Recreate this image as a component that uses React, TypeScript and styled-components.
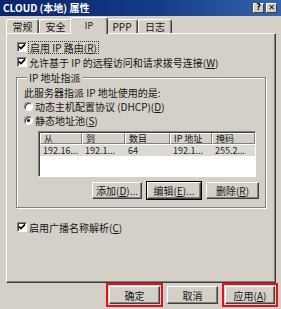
import React from 'react';
import styled, { createGlobalStyle } from 'styled-components';

const GlobalStyle = createGlobalStyle`
	html, body {
		margin: 0;
		padding: 0;
		background: #d4d0c8;
	}
	body {
		font-family: "Noto Sans CJK SC", "DejaVu Sans", sans-serif;
		font-size: 10px;
		color: #161616;
	}
	* {
		box-sizing: border-box;
	}
`;

const Window = styled.div`
	width: 281px;
	height: 309px;
	display: flex;
	flex-direction: column;
	background: #d4d0c8;
	overflow: hidden;
`;

const TitleBar = styled.div`
	height: 16px;
	flex: none;
	display: flex;
	align-items: center;
	justify-content: space-between;
	padding: 0 4px 0 3px;
	background: linear-gradient(to right, #0a246a 0%, #163a86 55%, #3566ad 100%);
	color: #fff;
	font-weight: bold;
	font-size: 10px;
	line-height: 12px;
`;

const TitleButtons = styled.div`
	display: flex;
	gap: 2px;
`;

const TitleBtn = styled.span`
	width: 11px;
	height: 10px;
	display: flex;
	align-items: center;
	justify-content: center;
	background: #d4d0c8;
	border: 1px solid;
	border-color: #fff #404040 #404040 #fff;
	color: #000;
	font-family: "DejaVu Sans", sans-serif;
	font-size: 8px;
	font-weight: bold;
	line-height: 8px;
`;

const TabStrip = styled.div`
	position: relative;
	z-index: 1;
	height: 17px;
	flex: none;
	display: flex;
	align-items: flex-end;
	padding-left: 6px;
`;

const Tab = styled.div<{ $active?: boolean; $w: number }>`
	position: relative;
	z-index: ${(p) => (p.$active ? 2 : 1)};
	width: ${(p) => p.$w}px;
	height: ${(p) => (p.$active ? 17 : 14)}px;
	margin: ${(p) => (p.$active ? '0 -2px -1px' : '0')};
	display: flex;
	align-items: center;
	justify-content: center;
	background: #d4d0c8;
	border-top: 1px solid #fff;
	border-left: 1px solid #fff;
	border-right: 1px solid #404040;
	border-radius: 3px 3px 0 0;
	box-shadow: inset -1px 0 0 #808080;
	font-size: ${(p) => (p.$active ? 9 : 10)}px;
	line-height: 11px;
	padding-bottom: ${(p) => (p.$active ? 2 : 0)}px;
`;

const Panel = styled.div`
	width: 270px;
	height: 250px;
	flex: none;
	margin-left: 6px;
	display: flex;
	flex-direction: column;
	padding: 6px 0 0 10px;
	border-top: 1px solid #fff;
	border-left: 1px solid #fff;
	border-right: 1px solid #404040;
	border-bottom: 1px solid #404040;
	box-shadow: inset -1px -1px 0 #808080;
`;

const CheckRow = styled.div<{ $top?: number }>`
	height: 14px;
	margin-top: ${(p) => p.$top || 0}px;
	display: flex;
	align-items: center;
	gap: 2px;
	line-height: 11px;
	white-space: nowrap;
`;

const Box = styled.span`
	width: 10px;
	height: 10px;
	flex: none;
	display: flex;
	align-items: center;
	justify-content: center;
	background: #fff;
	border: 1px solid;
	border-color: #808080 #fff #fff #808080;
	box-shadow: inset 1px 1px 0 #404040;
`;

const FocusLabel = styled.span`
	outline: 1px dotted #333;
	padding: 0 1px;
`;

const Group = styled.fieldset`
	width: 250px;
	margin: 3px 0 0 -1px;
	padding: 0 6px 8px 7px;
	border: 1px solid #808080;
	box-shadow: inset 1px 1px 0 #fff, 1px 1px 0 #fff;
	min-width: 0;
`;

const Legend = styled.legend`
	margin-left: 3px;
	padding: 0 2px;
	background: #d4d0c8;
	line-height: 11px;
	font-size: 10px;
`;

const Line = styled.div`
	margin-top: 4px;
	line-height: 11px;
	white-space: nowrap;
`;

const RadioRow = styled.div<{ $top?: number }>`
	height: 14px;
	margin-top: ${(p) => p.$top || 0}px;
	display: flex;
	align-items: center;
	gap: 2px;
	line-height: 11px;
	white-space: nowrap;
`;

const Radio = styled.span<{ $on?: boolean }>`
	width: 9px;
	height: 9px;
	flex: none;
	border-radius: 50%;
	background: #fff;
	border: 1px solid;
	border-color: #808080 #fff #fff #808080;
	box-shadow: inset 1px 1px 0 #404040;
	display: flex;
	align-items: center;
	justify-content: center;

	&::after {
		content: '';
		display: ${(p) => (p.$on ? 'block' : 'none')};
		width: 3px;
		height: 3px;
		border-radius: 50%;
		background: #000;
	}
`;

const List = styled.div`
	width: 218px;
	height: 46px;
	margin: 4px 0 0 14px;
	background: #fff;
	border: 1px solid;
	border-color: #808080 #fff #fff #808080;
	box-shadow: inset 1px 1px 0 #404040;
	padding: 1px 0 0 1px;
	overflow: hidden;
`;

const Cols = '42px 43px 45px 42px 43px';

const HeaderRow = styled.div`
	display: grid;
	grid-template-columns: ${Cols};
	height: 11px;
`;

const HeadCell = styled.div`
	background: #d4d0c8;
	border-top: 1px solid #fff;
	border-left: 1px solid #fff;
	border-right: 1px solid #808080;
	border-bottom: 1px solid #808080;
	padding-left: 3px;
	font-size: 9px;
	line-height: 9px;
	white-space: nowrap;
	overflow: hidden;
`;

const DataRow = styled.div`
	display: grid;
	grid-template-columns: ${Cols};
	height: 11px;
	margin-top: 1px;
	background: #dcd9d2;
`;

const Cell = styled.div`
	padding-left: 3px;
	font-size: 9px;
	line-height: 11px;
	color: #222;
	white-space: nowrap;
	overflow: hidden;
`;

const ButtonRow = styled.div`
	display: flex;
	justify-content: flex-end;
	gap: 5px;
	margin-top: 5px;
`;

const Button = styled.button<{ $w: number; $default?: boolean; $marked?: boolean }>`
	width: ${(p) => p.$w}px;
	height: 17px;
	padding: 0;
	background: #d4d0c8;
	border: 1px solid;
	border-color: #fff #404040 #404040 #fff;
	box-shadow: ${(p) => (p.$default ? '0 0 0 1px #000, ' : '')}inset -1px -1px 0 #808080;
	font-family: inherit;
	font-size: 10px;
	line-height: 11px;
	color: #161616;
	white-space: nowrap;
	outline: ${(p) => (p.$marked ? '2px solid #e0141c' : 'none')};
	outline-offset: 1px;
`;

const Footer = styled.div`
	display: flex;
	justify-content: flex-end;
	gap: 7px;
	padding: 3px 6px 0 0;
`;

const FooterButton = styled(Button)`
	height: 18px;
`;

const Check = () => (
	<svg width='8' height='8' viewBox='0 0 8 8'>
		<polyline points='1,3.5 3,5.6 7,1.4' fill='none' stroke='#000' strokeWidth='1.7' />
	</svg>
);

const App: React.FC = () => {
	return (
		<>
			<GlobalStyle />
			<Window>
				<TitleBar>
					<span>CLOUD (本地) 属性</span>
					<TitleButtons>
						<TitleBtn>?</TitleBtn>
						<TitleBtn>✕</TitleBtn>
					</TitleButtons>
				</TitleBar>

				<TabStrip>
					<Tab $w={33}>常规</Tab>
					<Tab $w={33}>安全</Tab>
					<Tab $w={38} $active>IP</Tab>
					<Tab $w={32}>PPP</Tab>
					<Tab $w={34}>日志</Tab>
				</TabStrip>

				<Panel>
					<CheckRow>
						<Box>
							<Check />
						</Box>
						<FocusLabel>
							启用 IP 路由(<u>R</u>)
						</FocusLabel>
					</CheckRow>
					<CheckRow $top={1}>
						<Box>
							<Check />
						</Box>
						<span>
							允许基于 IP 的远程访问和请求拨号连接(<u>W</u>)
						</span>
					</CheckRow>

					<Group>
						<Legend>IP 地址指派</Legend>
						<Line>此服务器指派 IP 地址使用的是:</Line>
						<RadioRow $top={1}>
							<Radio />
							<span>
								动态主机配置协议 (DHCP)(<u>D</u>)
							</span>
						</RadioRow>
						<RadioRow>
							<Radio $on />
							<span>
								静态地址池(<u>S</u>)
							</span>
						</RadioRow>

						<List>
							<HeaderRow>
								<HeadCell>从</HeadCell>
								<HeadCell>到</HeadCell>
								<HeadCell>数目</HeadCell>
								<HeadCell>IP 地址</HeadCell>
								<HeadCell>掩码</HeadCell>
							</HeaderRow>
							<DataRow>
								<Cell>192.16...</Cell>
								<Cell>192.1...</Cell>
								<Cell>64</Cell>
								<Cell>192.1...</Cell>
								<Cell>255.2...</Cell>
							</DataRow>
						</List>

						<ButtonRow>
							<Button $w={50}>
								添加(<u>D</u>)...
							</Button>
							<Button $w={54} $default>
								编辑(<u>E</u>)...
							</Button>
							<Button $w={53}>
								删除(<u>R</u>)
							</Button>
						</ButtonRow>
					</Group>

					<CheckRow $top={12}>
						<Box>
							<Check />
						</Box>
						<span>
							启用广播名称解析(<u>C</u>)
						</span>
					</CheckRow>
				</Panel>

				<Footer>
					<FooterButton $w={51} $marked>
						确定
					</FooterButton>
					<FooterButton $w={51}>取消</FooterButton>
					<FooterButton $w={50} $marked>
						应用(<u>A</u>)
					</FooterButton>
				</Footer>
			</Window>
		</>
	);
};

export default App;
